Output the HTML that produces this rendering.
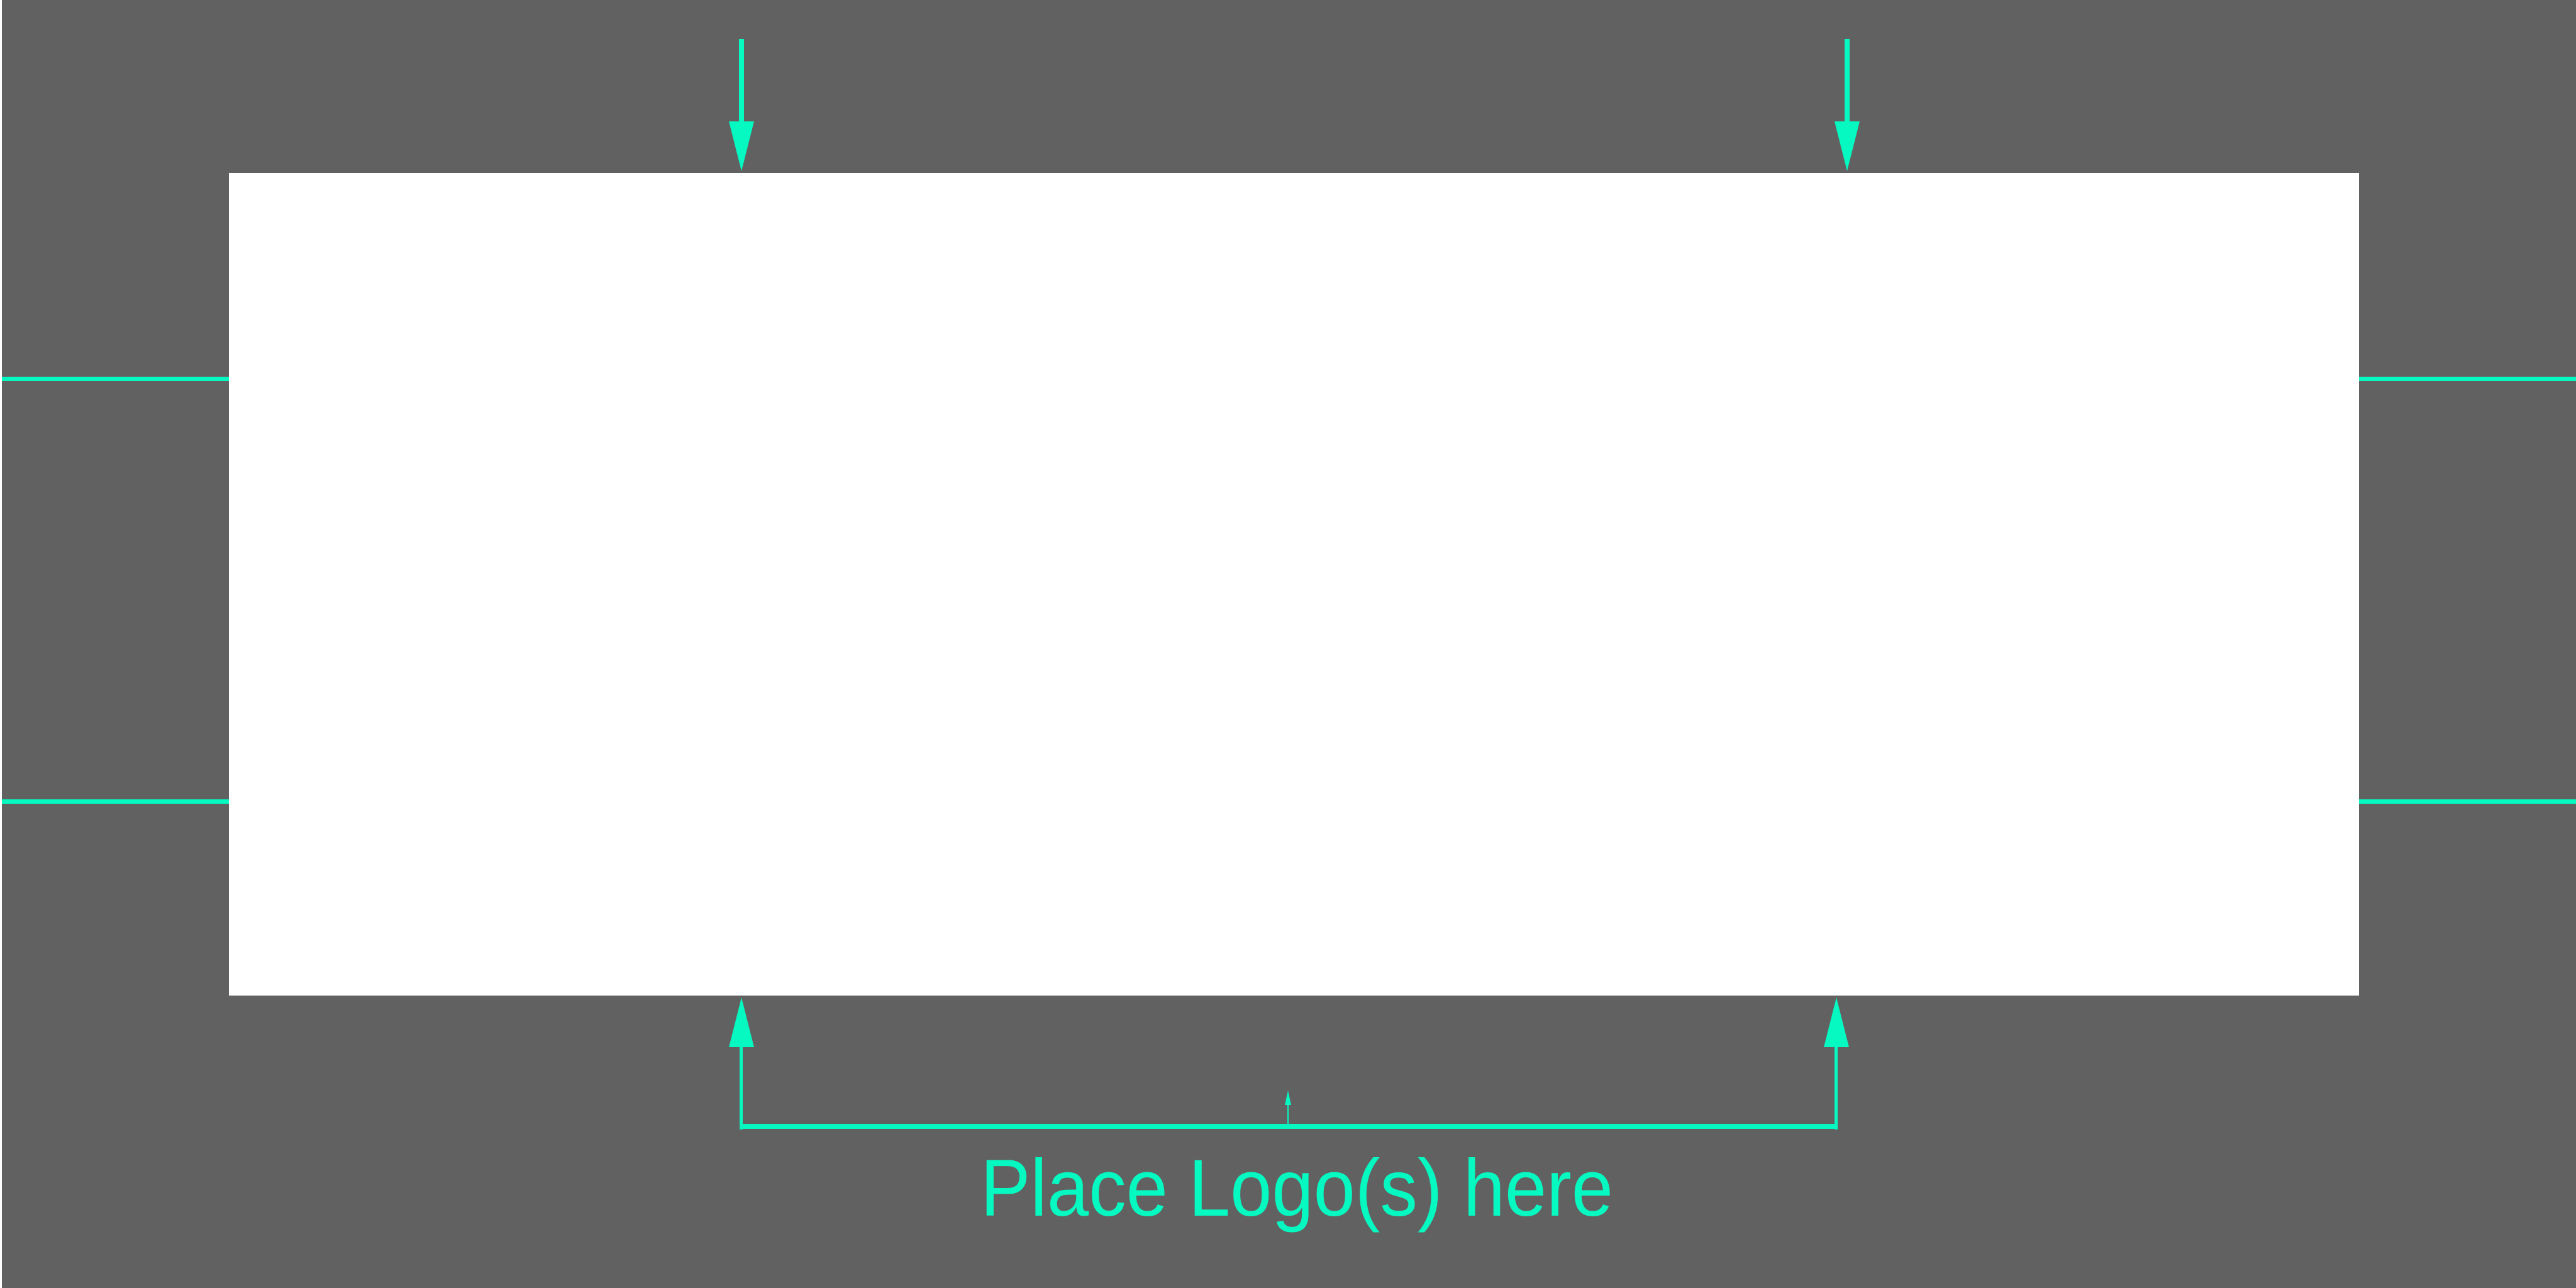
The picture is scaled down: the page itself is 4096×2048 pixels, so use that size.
<!DOCTYPE html>
<html><head><meta charset="utf-8"><style>
html,body{margin:0;padding:0;background:#616161;}
svg{display:block}
</style></head><body>
<svg width="4096" height="2048" viewBox="0 0 4096 2048" xmlns="http://www.w3.org/2000/svg">
<rect width="4096" height="2048" fill="#616161"/>
<rect x="0" y="0" width="3" height="2048" fill="#ffffff"/>
<rect x="364" y="275" width="3387" height="1308" fill="#ffffff"/>
<g fill="#06F9C0">
<rect x="3" y="599" width="361" height="7"/>
<rect x="3751" y="599" width="345" height="7"/>
<rect x="3" y="1271" width="361" height="7"/>
<rect x="3751" y="1271" width="345" height="7"/>
<rect x="1175" y="62" width="8" height="136"/>
<polygon points="1159,193 1199,193 1179,272"/>
<rect x="2933" y="62" width="8" height="136"/>
<polygon points="2917,193 2957,193 2937,272"/>
<rect x="1176" y="1660" width="5" height="136"/>
<polygon points="1159,1665 1199,1665 1179,1586"/>
<rect x="2917" y="1660" width="5" height="136"/>
<polygon points="2900,1665 2940,1665 2920,1586"/>
<rect x="1176" y="1787" width="1746" height="8"/>
<rect x="2047" y="1755" width="2" height="34"/>
<polygon points="2043,1757 2053,1757 2048,1734"/>
<text x="1559" y="1933" font-family="Liberation Sans, sans-serif" font-size="128" textLength="1006" lengthAdjust="spacingAndGlyphs">Place Logo(s) here</text>
</g>
</svg>
</body></html>
